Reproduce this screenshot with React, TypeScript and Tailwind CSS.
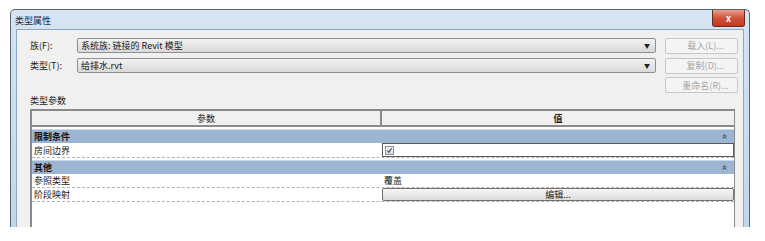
import { ChevronsUp } from 'lucide-react';

const FONT = { fontFamily: '"Noto Sans CJK SC", "DejaVu Sans", sans-serif' };

function Combo({ text }: { text: string }) {
  return (
    <div className="flex-1 h-[15px] flex items-center justify-between border border-[#8e8f8f] rounded-[2px] bg-gradient-to-b from-[#f2f2f2] to-[#d9d9d9] pl-[3px] pr-[5px]">
      <span className="text-[9px] leading-none text-[#222]">{text}</span>
      <span className="text-[6px] leading-none text-[#222]">▼</span>
    </div>
  );
}

function SideButton({ text }: { text: string }) {
  return (
    <div className="w-[73px] h-[16px] flex items-center justify-center border border-[#c8c8c8] rounded-[2px] bg-[#f4f4f4] text-[9px] leading-none text-[#a6a6a6]">
      <span className="pl-[8px]">{text}</span>
    </div>
  );
}

function GroupRow({ text }: { text: string }) {
  return (
    <div className="h-[14px] flex items-center justify-between bg-[#9bb5d3] border-t border-[#c9d8ea] pl-[2px] pr-[6px]">
      <span className="text-[9px] leading-none font-bold text-[#111]">{text}</span>
      <ChevronsUp className="w-[7px] h-[7px] text-[#222]" strokeWidth={3} />
    </div>
  );
}

export default function App() {
  return (
    <div className="w-[765px] h-[241px] bg-white overflow-hidden" style={FONT}>
      <div className="ml-[10px] mt-[9px] w-[740px] h-[218px] flex flex-col border border-b-0 border-[#5a6470] rounded-t-[5px] bg-gradient-to-b from-[#d6e4f3] to-[#c2d6eb] overflow-hidden">
        {/* Title bar */}
        <div className="h-[19px] flex items-start justify-between pl-[4px] pr-[4px] shrink-0">
          <span className="text-[9px] leading-none mt-[6px] text-[#1e2a3a]">类型属性</span>
          <div className="w-[33px] h-[17px] flex items-center justify-center rounded-b-[3px] border border-t-0 border-[#6b2a20] bg-gradient-to-b from-[#e8a08e] via-[#d0513a] to-[#c23a22]">
            <span className="text-[9px] leading-none font-bold text-white">x</span>
          </div>
        </div>

        {/* Client area */}
        <div className="flex-1 mx-[5px] border border-b-0 border-[#8ea6c0] bg-[#f0f0f0] flex flex-col pt-[7px] pl-[13px] pr-[5px]">
          <div className="flex items-center h-[17px]">
            <span className="w-[47px] text-[9px] leading-none text-[#222]">族(F):</span>
            <Combo text="系统族: 链接的 Revit 模型" />
            <div className="ml-[9px]"><SideButton text="载入(L)..." /></div>
          </div>
          <div className="flex items-center h-[17px] mt-[3px]">
            <span className="w-[47px] text-[9px] leading-none text-[#222]">类型(T):</span>
            <Combo text="给排水.rvt" />
            <div className="ml-[9px]"><SideButton text="复制(D)..." /></div>
          </div>
          <div className="flex justify-end h-[17px] mt-[3px]">
            <SideButton text="重命名(R)..." />
          </div>

          <div className="text-[9px] leading-none text-[#222] mt-[2px]">类型参数</div>

          {/* Table */}
          <div className="mt-[4px] mr-[3px] flex-1 flex flex-col border-l-2 border-t-2 border-r border-[#8a8a8a] bg-white">
            <div className="h-[16px] flex bg-[#f0f0f0] border-b-2 border-[#8a8a8a]">
              <div className="w-[350px] flex items-center justify-center border-r-2 border-[#8a8a8a] text-[9px] leading-none text-[#222]">参数</div>
              <div className="flex-1 flex items-center justify-center text-[9px] leading-none font-bold text-[#222]">值</div>
            </div>
            <div className="h-[2px] bg-white" />
            <GroupRow text="限制条件" />
            <div className="h-[15px] flex border-b border-dashed border-[#b0b0b0]">
              <div className="w-[350px] flex items-center pl-[2px] text-[9px] leading-none text-[#222]">房间边界</div>
              <div className="flex-1 flex items-center border border-[#5a5a5a] pl-[2px]">
                <div className="w-[9px] h-[9px] border border-[#8e8f8f] bg-gradient-to-b from-[#f4f4f4] to-[#dcdcdc] flex items-center justify-center">
                  <svg viewBox="0 0 10 10" className="w-[7px] h-[7px]">
                    <path d="M2 5 L4 7.5 L8 2" fill="none" stroke="#2a4d8f" strokeWidth="1.6" />
                  </svg>
                </div>
              </div>
            </div>
            <div className="h-[2px] bg-white" />
            <GroupRow text="其他" />
            <div className="h-[14px] flex border-b border-dashed border-[#b0b0b0]">
              <div className="w-[350px] flex items-center pl-[2px] text-[9px] leading-none text-[#222]">参照类型</div>
              <div className="flex-1 flex items-center pl-[2px] text-[9px] leading-none text-[#222]">覆盖</div>
            </div>
            <div className="h-[14px] flex border-b border-dashed border-[#b0b0b0]">
              <div className="w-[350px] flex items-center pl-[2px] text-[9px] leading-none text-[#222]">阶段映射</div>
              <div className="flex-1 flex items-center justify-center border border-[#707070] rounded-[2px] bg-gradient-to-b from-[#f6f6f6] to-[#dcdcdc] text-[9px] leading-none text-[#222]">
                编辑...
              </div>
            </div>
            <div className="flex-1 bg-white" />
          </div>
        </div>
      </div>
    </div>
  );
}
